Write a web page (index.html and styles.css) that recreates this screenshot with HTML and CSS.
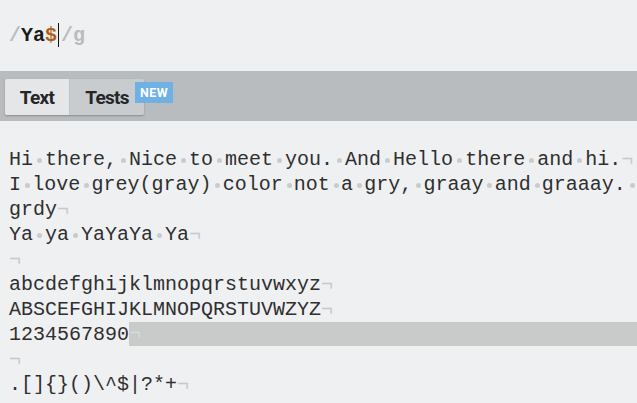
FILE: index.html
```html
<!DOCTYPE html>
<html>
<head>
<meta charset="utf-8">
<link rel="stylesheet" href="styles.css">
</head>
<body>
<div class="page">
  <div class="expr">
    <span class="delim">/</span><span class="lit">Ya</span><span class="anchor">$</span><span class="caret"></span><span class="delim">/g</span>
  </div>
  <div class="tabbar">
    <div class="tabs">
      <div class="tab active">Text</div>
      <div class="tab">Tests</div>
      <span class="badge">NEW</span>
    </div>
  </div>
  <div class="editor">
    <div class="line">Hi<i class="sp">•</i>there,<i class="sp">•</i>Nice<i class="sp">•</i>to<i class="sp">•</i>meet<i class="sp">•</i>you.<i class="sp">•</i>And<i class="sp">•</i>Hello<i class="sp">•</i>there<i class="sp">•</i>and<i class="sp">•</i>hi.<i class="nl">¬</i></div>
    <div class="line">I<i class="sp">•</i>love<i class="sp">•</i>grey(gray)<i class="sp">•</i>color<i class="sp">•</i>not<i class="sp">•</i>a<i class="sp">•</i>gry,<i class="sp">•</i>graay<i class="sp">•</i>and<i class="sp">•</i>graaay.<i class="sp">•</i></div>
    <div class="line">grdy<i class="nl">¬</i></div>
    <div class="line">Ya<i class="sp">•</i>ya<i class="sp">•</i>YaYaYa<i class="sp">•</i>Ya<i class="nl">¬</i></div>
    <div class="line"><i class="nl">¬</i></div>
    <div class="line">abcdefghijklmnopqrstuvwxyz<i class="nl">¬</i></div>
    <div class="line">ABSCEFGHIJKLMNOPQRSTUVWZYZ<i class="nl">¬</i></div>
    <div class="line">1234567890<span class="hl"><i class="nl">¬</i></span></div>
    <div class="line"><i class="nl">¬</i></div>
    <div class="line">.[]{}()\^$|?*+<i class="nl">¬</i></div>
  </div>
</div>
</body>
</html>
```
FILE: styles.css
```css
html, body {
  margin: 0;
  padding: 0;
}
body {
  width: 637px;
  height: 403px;
  overflow: hidden;
  background: #eff0f2;
}
.page {
  display: flex;
  flex-direction: column;
}
.expr {
  height: 71px;
  display: flex;
  align-items: center;
  padding-left: 9px;
  padding-bottom: 1px;
  box-sizing: border-box;
  font-family: "Liberation Mono", monospace;
  font-weight: bold;
  font-size: 20px;
  color: #1b1b1b;
}
.delim { color: #b8bcc0; }
.anchor { color: #b35c12; }
.caret {
  display: inline-block;
  width: 1px;
  height: 24px;
  background: #111;
  margin: 0 2px 0 1px;
}
.tabbar {
  height: 50px;
  background: #b8bcbf;
  display: flex;
  align-items: center;
  padding-left: 5px;
}
.tabs {
  position: relative;
  display: flex;
  height: 36px;
  margin-top: 1px;
  border-radius: 2px;
  box-shadow: 0 1px 2px rgba(0,0,0,0.25);
}
.tab {
  display: flex;
  align-items: center;
  justify-content: center;
  font-family: Roboto, "Liberation Sans", sans-serif;
  font-weight: bold;
  font-size: 19px;
  letter-spacing: -0.7px;
  color: #262626;
  background: #c9cccf;
  width: 74px;
  border-radius: 0 2px 2px 0;
  padding-top: 1px;
  box-sizing: border-box;
}
.tab.active {
  background: #e5e6e8;
  width: 65px;
  border-radius: 2px 0 0 2px;
  border-right: 1px solid #bfc2c5;
}
.badge {
  position: absolute;
  left: 130px;
  top: 3px;
  width: 38px;
  height: 21px;
  background: #6fb1e2;
  color: #fff;
  font-family: Roboto, "Liberation Sans", sans-serif;
  font-weight: bold;
  font-size: 12.5px;
  letter-spacing: 0.4px;
  display: flex;
  align-items: center;
  justify-content: center;
}
.editor {
  padding-top: 26px;
  font-family: "Liberation Mono", monospace;
  font-size: 20px;
  color: #2f2f2f;
}
.line {
  display: flex;
  height: 25px;
  line-height: 25px;
  padding-left: 9px;
  white-space: pre;
}
.line i {
  font-style: normal;
  color: #c6c8ca;
}
.line .sp {
  position: relative;
  display: inline-block;
  width: 12px;
  color: transparent;
  font-size: 12px;
  overflow: hidden;
}
.line .sp::before {
  content: "";
  position: absolute;
  left: 4px;
  top: 11px;
  width: 5px;
  height: 5px;
  border-radius: 50%;
  background: #c9cbcd;
}
.hl {
  flex: 1;
  background: #c9caca;
  height: 24px;
  line-height: 24px;
}
.hl .nl {
  color: #d9dadb;
}
```
